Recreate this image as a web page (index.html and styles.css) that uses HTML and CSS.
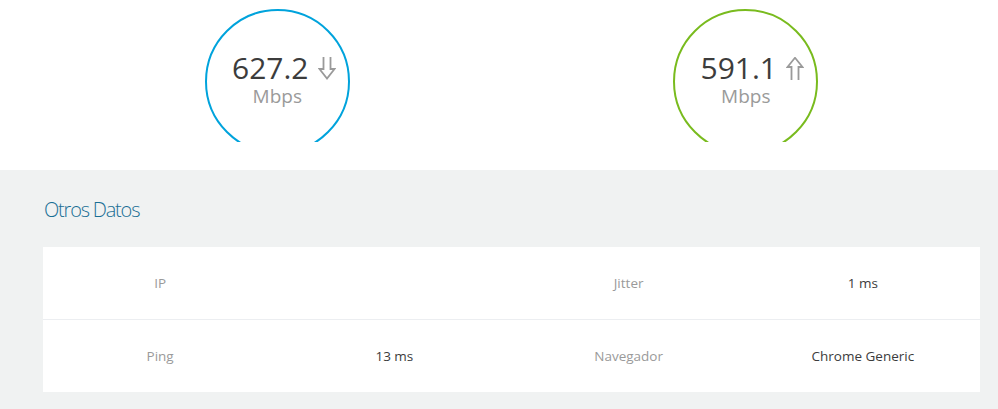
FILE: index.html
```html
<!DOCTYPE html>
<html lang="es">
<head>
<meta charset="utf-8">
<title>Test de velocidad</title>
<link rel="stylesheet" href="styles.css">
</head>
<body>
<section class="top">
  <div class="gauges">
    <div class="gauge">
      <div class="clip">
        <div class="circle circle-down">
          <div class="value"><span class="num">627.2</span><svg class="arrow" width="18" height="23" viewBox="0 0 18 23"><path d="M5.5 0 V12 H1.5 L9 21.5 L16.5 12 H12.5 V0" fill="none" stroke="#9a9a9a" stroke-width="1.8"/></svg></div>
          <div class="unit">Mbps</div>
        </div>
      </div>
    </div>
    <div class="gauge">
      <div class="clip">
        <div class="circle circle-up">
          <div class="value"><span class="num">591.1</span><svg class="arrow" width="18" height="23" viewBox="0 0 18 23"><path d="M5.5 23 V10 H1.5 L9 0.8 L16.5 10 H12.5 V23" fill="none" stroke="#9a9a9a" stroke-width="1.8"/></svg></div>
          <div class="unit">Mbps</div>
        </div>
      </div>
    </div>
  </div>
</section>
<section class="data">
  <h2 class="title">Otros Datos</h2>
  <div class="card">
    <div class="row">
      <div class="cell label">IP</div>
      <div class="cell val"></div>
      <div class="cell label">Jitter</div>
      <div class="cell val">1 ms</div>
    </div>
    <div class="row">
      <div class="cell label">Ping</div>
      <div class="cell val">13 ms</div>
      <div class="cell label">Navegador</div>
      <div class="cell val">Chrome Generic</div>
    </div>
  </div>
</section>
</body>
</html>
```
FILE: styles.css
```css
html, body {
  margin: 0;
  padding: 0;
  background: #ffffff;
  font-family: "Open Sans", "Noto Sans", sans-serif;
}
.top {
  height: 170px;
  background: #ffffff;
}
.gauges {
  margin: 0 18px 0 43px;
  display: grid;
  grid-template-columns: 1fr 1fr;
  padding-top: 9px;
}
.gauge {
  display: flex;
  justify-content: center;
}
.clip {
  width: 145px;
  height: 133px;
  overflow: hidden;
}
.circle {
  box-sizing: border-box;
  width: 145px;
  height: 145px;
  border-radius: 50%;
  border: 2px solid #00a3dc;
  display: flex;
  flex-direction: column;
  align-items: center;
  justify-content: center;
  padding-bottom: 6px;
}
.circle-up {
  border-color: #79bb1e;
}
.value {
  display: flex;
  align-items: center;
  gap: 9px;
  margin-left: 13px;
  height: 34px;
}
.num {
  font-size: 30px;
  color: #3c3c3c;
  letter-spacing: 0;
  line-height: 34px;
}
.arrow {
  display: block;
  margin-top: 2px;
}
.unit {
  font-size: 19px;
  color: #9a9a9a;
  line-height: 22px;
}
.data {
  background: #f0f2f2;
  padding: 27px 18px 17px 43px;
  height: 239px;
  box-sizing: border-box;
}
.title {
  margin: 0 0 24px 1px;
  font-weight: 300;
  font-size: 20px;
  line-height: 26px;
  color: #1a6f95;
  letter-spacing: -1.2px;
}
.card {
  background: #ffffff;
}
.row {
  display: grid;
  grid-template-columns: repeat(4, 1fr);
  height: 72px;
  align-items: center;
}
.row + .row {
  border-top: 1px solid #eceef1;
}
.cell {
  text-align: center;
  font-size: 13.5px;
}
.label {
  color: #9a9a9a;
}
.val {
  color: #3c3c3c;
}
```
